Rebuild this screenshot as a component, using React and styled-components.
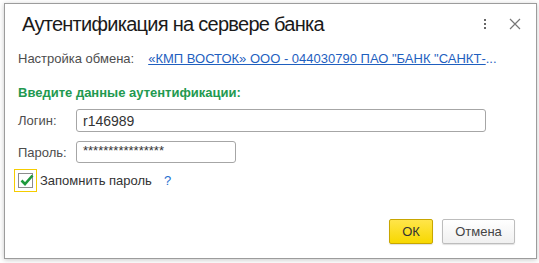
import styled, { createGlobalStyle } from "styled-components";

const GlobalStyle = createGlobalStyle`
  html, body {
    margin: 0;
    padding: 0;
    background: #ffffff;
  }
  body {
    padding: 3px 3px 4px 4px;
    font-family: "Liberation Sans", Arial, sans-serif;
  }
`;

const Dialog = styled.div`
  box-sizing: border-box;
  width: 533px;
  height: 256px;
  border: 1px solid #9c9c9c;
  background: #fff;
  box-shadow: 0 1px 5px rgba(0, 0, 0, 0.22);
  display: flex;
  flex-direction: column;
`;

const Header = styled.div`
  height: 40px;
  display: flex;
  align-items: center;
  padding: 0 0 0 17px;
`;

const Title = styled.div`
  flex: 1;
  font-size: 20px;
  color: #1a1a1a;
  letter-spacing: -0.72px;
`;

const IconButton = styled.div`
  width: 30px;
  height: 30px;
  display: flex;
  align-items: center;
  justify-content: center;
  margin-right: ${(p) => p.$mr || 0}px;
`;

const Body = styled.div`
  flex: 1;
  display: flex;
  flex-direction: column;
  padding: 0 13px;
`;

const Row = styled.div`
  display: flex;
  align-items: center;
  height: ${(p) => p.$h}px;
  margin-top: ${(p) => p.$mt}px;
`;

const Label = styled.div`
  font-size: 13px;
  color: #4d4d4d;
  width: ${(p) => (p.$w ? `${p.$w}px` : "auto")};
  flex-shrink: 0;
`;

const LinkWrap = styled.div`
  font-size: 13px;
  color: #1f5fbf;
  margin-left: 14px;
  white-space: nowrap;
`;

const LinkText = styled.span`
  text-decoration: underline;
`;

const Heading = styled.div`
  font-size: 13px;
  font-weight: bold;
  color: #22994f;
`;

const Input = styled.div`
  box-sizing: border-box;
  width: ${(p) => p.$w}px;
  height: 100%;
  border: 1px solid #a6a6a6;
  border-radius: 3px;
  display: flex;
  align-items: center;
  padding-left: 6px;
  font-size: ${(p) => p.$fs || 14}px;
  color: #333;
`;

const Stars = styled.span`
  margin-top: -4px;
`;

const Focus = styled.div`
  box-sizing: border-box;
  width: 23px;
  height: 23px;
  border: 1px solid #f5cc00;
  display: flex;
  align-items: center;
  justify-content: center;
  margin-left: -4px;
`;

const Box = styled.div`
  box-sizing: border-box;
  width: 15px;
  height: 15px;
  border: 1px solid #8c8c8c;
  background: #fff;
  position: relative;
`;

const CheckMark = styled.svg`
  position: absolute;
  left: 0px;
  top: -2px;
`;

const CheckLabel = styled.div`
  font-size: 13px;
  color: #333;
  margin-left: 3px;
`;

const Help = styled.div`
  font-size: 13px;
  color: #1f6fd0;
  margin-left: 12px;
`;

const Footer = styled.div`
  display: flex;
  justify-content: flex-end;
  gap: 9px;
  margin-top: 27px;
  padding-right: 8px;
`;

const Button = styled.div`
  box-sizing: border-box;
  height: 25px;
  width: ${(p) => p.$w}px;
  display: flex;
  align-items: center;
  justify-content: center;
  font-size: 13px;
  border-radius: 2px;
  color: ${(p) => (p.$primary ? "#333" : "#444")};
  border: 1px solid ${(p) => (p.$primary ? "#c8a600" : "#bdbdbd")};
  background: ${(p) =>
    p.$primary
      ? "linear-gradient(#ffe54a, #f7d800)"
      : "linear-gradient(#ffffff, #f0f0f0)"};
  box-shadow: 0 1px 1px rgba(0, 0, 0, 0.12);
`;

export default function App() {
  return (
    <>
      <GlobalStyle />
      <Dialog>
        <Header>
          <Title>Аутентификация на сервере банка</Title>
          <IconButton>
            <svg width="4" height="12" viewBox="0 0 4 12">
              <rect x="1" y="1" width="2" height="2" fill="#666" />
              <rect x="1" y="5" width="2" height="2" fill="#666" />
              <rect x="1" y="9" width="2" height="2" fill="#666" />
            </svg>
          </IconButton>
          <IconButton $mr={6}>
            <svg width="12" height="12" viewBox="0 0 12 12">
              <path d="M1 1 L11 11 M11 1 L1 11" stroke="#777" strokeWidth="1.2" />
            </svg>
          </IconButton>
        </Header>
        <Body>
          <Row $h={20} $mt={4}>
            <Label>Настройка обмена:</Label>
            <LinkWrap>
              <LinkText>«КМП ВОСТОК» ООО - 044030790 ПАО "БАНК "САНКТ-</LinkText>...
            </LinkWrap>
          </Row>
          <Row $h={20} $mt={14}>
            <Heading>Введите данные аутентификации:</Heading>
          </Row>
          <Row $h={23} $mt={7}>
            <Label $w={58}>Логин:</Label>
            <Input $w={410}>r146989</Input>
          </Row>
          <Row $h={22} $mt={9}>
            <Label $w={58}>Пароль:</Label>
            <Input $w={160} $fs={13}>
              <Stars>****************</Stars>
            </Input>
          </Row>
          <Row $h={23} $mt={6}>
            <Focus>
              <Box>
                <CheckMark width="16" height="16" viewBox="0 0 16 16">
                  <path d="M2.5 8.5 L6 12 L13.5 3.5" fill="none" stroke="#1f9a3c" strokeWidth="2.6" />
                </CheckMark>
              </Box>
            </Focus>
            <CheckLabel>Запомнить пароль</CheckLabel>
            <Help>?</Help>
          </Row>
          <Footer>
            <Button $primary $w={44}>ОК</Button>
            <Button $w={73}>Отмена</Button>
          </Footer>
        </Body>
      </Dialog>
    </>
  );
}
